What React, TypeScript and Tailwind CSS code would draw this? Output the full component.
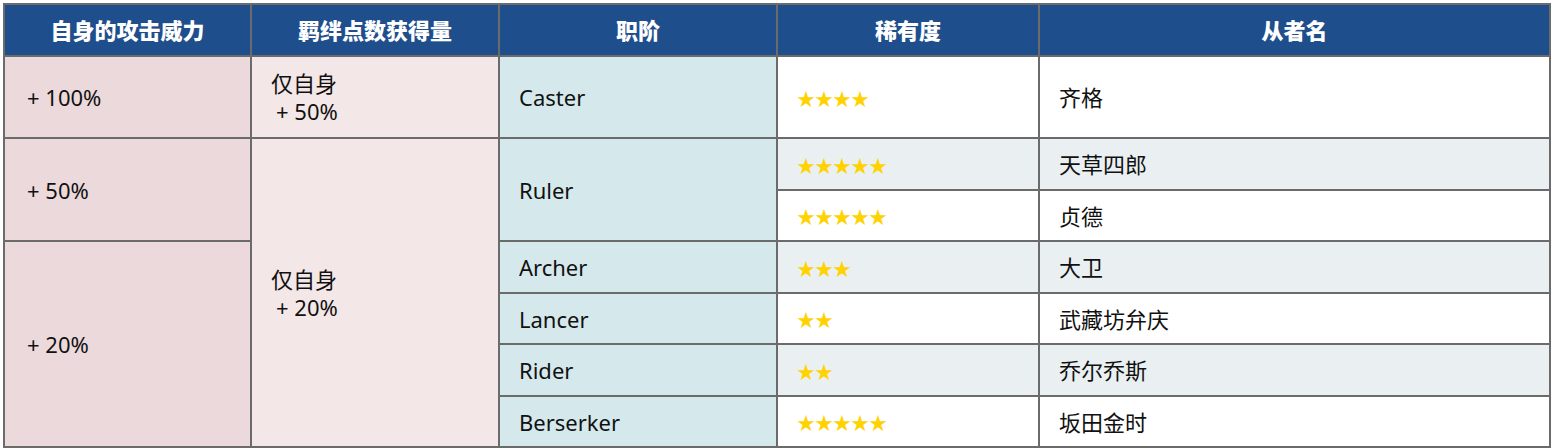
const FONT = "font-['Noto_Sans','Noto_Sans_CJK_SC',sans-serif]";

type Row = {
  id: string;
  height: string;
  stars: number;
  name: string;
  shaded: boolean;
  power?: { text: string; rowSpan: number };
  bond?: { lines: string[]; rowSpan: number };
  klass?: { text: string; rowSpan: number };
};

const ROWS: Row[] = [
  {
    id: 'zig',
    height: 'h-[82px]',
    stars: 4,
    name: '齐格',
    shaded: false,
    power: { text: '+ 100%', rowSpan: 1 },
    bond: { lines: ['仅自身', '+ 50%'], rowSpan: 1 },
    klass: { text: 'Caster', rowSpan: 1 },
  },
  {
    id: 'amakusa',
    height: 'h-[52px]',
    stars: 5,
    name: '天草四郎',
    shaded: true,
    power: { text: '+ 50%', rowSpan: 2 },
    bond: { lines: ['仅自身', '+ 20%'], rowSpan: 6 },
    klass: { text: 'Ruler', rowSpan: 2 },
  },
  { id: 'jeanne', height: 'h-[51px]', stars: 5, name: '贞德', shaded: false },
  {
    id: 'david',
    height: 'h-[52px]',
    stars: 3,
    name: '大卫',
    shaded: true,
    power: { text: '+ 20%', rowSpan: 4 },
    klass: { text: 'Archer', rowSpan: 1 },
  },
  {
    id: 'benkei',
    height: 'h-[51px]',
    stars: 2,
    name: '武藏坊弁庆',
    shaded: false,
    klass: { text: 'Lancer', rowSpan: 1 },
  },
  {
    id: 'georgios',
    height: 'h-[52px]',
    stars: 2,
    name: '乔尔乔斯',
    shaded: true,
    klass: { text: 'Rider', rowSpan: 1 },
  },
  {
    id: 'kintoki',
    height: 'h-[51px]',
    stars: 5,
    name: '坂田金时',
    shaded: false,
    klass: { text: 'Berserker', rowSpan: 1 },
  },
];

const HEADERS = ['自身的攻击威力', '羁绊点数获得量', '职阶', '稀有度', '从者名'];

const cell = 'border-2 border-[#6b6b6b] align-middle text-[22px] leading-[30px] text-[#111]';

export default function App() {
  return (
    <div className={`bg-white pl-[3px] pt-[3px] ${FONT}`}>
      <table className="w-[1546px] table-fixed border-collapse">
        <colgroup>
          <col className="w-[247px]" />
          <col className="w-[248px]" />
          <col className="w-[278px]" />
          <col className="w-[262px]" />
          <col className="w-[511px]" />
        </colgroup>
        <thead>
          <tr className="h-[52px] bg-[#1f4e8c]">
            {HEADERS.map((label) => (
              <th
                key={label}
                className="border-2 border-[#6b6b6b] text-center align-middle text-[22px] font-black text-white"
              >
                {label}
              </th>
            ))}
          </tr>
        </thead>
        <tbody>
          {ROWS.map((row) => (
            <tr key={row.id} className={row.height}>
              {row.power ? (
                <td rowSpan={row.power.rowSpan} className={`${cell} bg-[#ecd9dc] pl-[22px]`}>
                  {row.power.text}
                </td>
              ) : null}
              {row.bond ? (
                <td
                  rowSpan={row.bond.rowSpan}
                  className={`${cell} bg-[#f4e7e7] pl-[19px] !leading-[28px]`}
                >
                  <div>{row.bond.lines[0]}</div>
                  <div className="pl-[5px]">{row.bond.lines[1]}</div>
                </td>
              ) : null}
              {row.klass ? (
                <td rowSpan={row.klass.rowSpan} className={`${cell} bg-[#d5e9ed] pl-[19px]`}>
                  {row.klass.text}
                </td>
              ) : null}
              <td
                className={`${cell} pl-[19px] ${row.shaded ? 'bg-[#eaf0f2]' : 'bg-white'}`}
              >
                <span className="font-['Noto_Sans_CJK_SC',sans-serif] text-[18px] text-[#ffd200]">
                  {'★'.repeat(row.stars)}
                </span>
              </td>
              <td
                className={`${cell} pl-[19px] ${row.shaded ? 'bg-[#eaf0f2]' : 'bg-white'}`}
              >
                {row.name}
              </td>
            </tr>
          ))}
        </tbody>
      </table>
    </div>
  );
}
